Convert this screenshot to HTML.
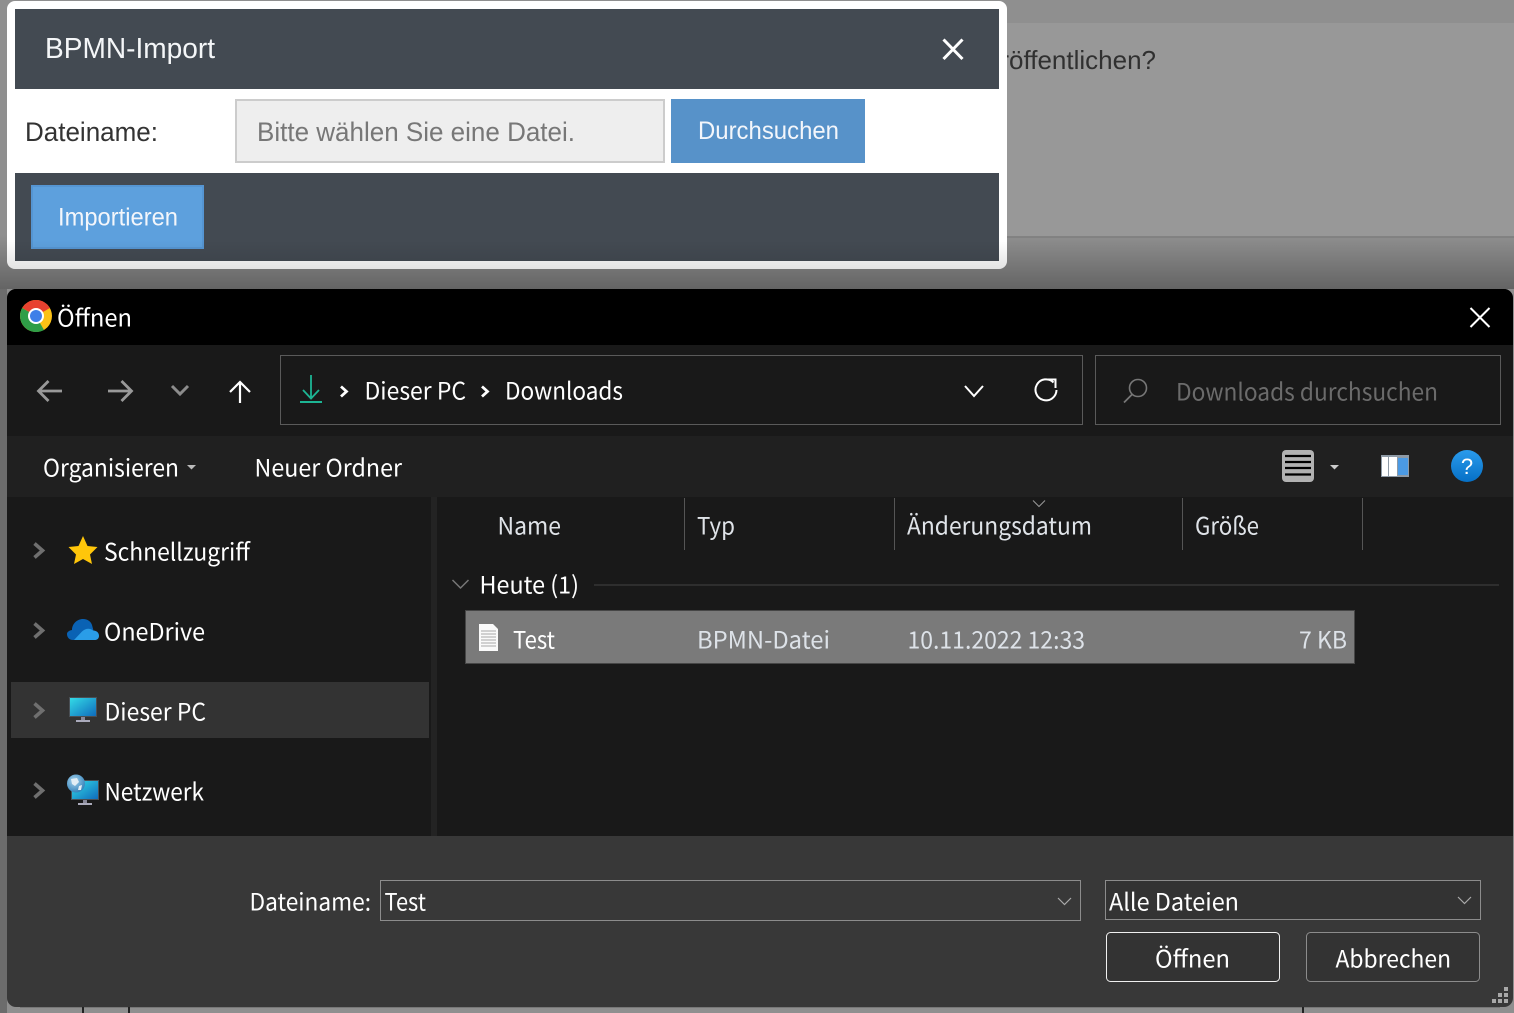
<!DOCTYPE html>
<html lang="de"><head><meta charset="utf-8"><title>Öffnen</title>
<style>
html,body{margin:0;padding:0;background:#6a6a6a;width:1514px;height:1013px;overflow:hidden}
svg{display:block}
.a{font-family:"Liberation Sans",Arial,sans-serif}
.s{font-family:"Noto Sans CJK JP","Liberation Sans",sans-serif;font-size:24px;fill:#fff}
.h{fill:#dfe3e8}
.r{fill:#dde2e8}
</style></head><body>
<svg width="1514" height="1013" viewBox="0 0 1514 1013" xmlns="http://www.w3.org/2000/svg">
<defs>
<linearGradient id="sh" x1="0" y1="0" x2="0" y2="1"><stop offset="0" stop-color="#000" stop-opacity="0"/><stop offset="1" stop-color="#000" stop-opacity=".3"/></linearGradient>
<linearGradient id="sh2" x1="0" y1="0" x2="0" y2="1"><stop offset="0" stop-color="#000" stop-opacity="0"/><stop offset="1" stop-color="#000" stop-opacity=".11"/></linearGradient>
<linearGradient id="scr" x1="0" y1="0" x2="1" y2="1"><stop offset="0" stop-color="#33dbe6"/><stop offset="1" stop-color="#0f6cbd"/></linearGradient>
<linearGradient id="hlp" x1="0" y1="0" x2="0" y2="1"><stop offset="0" stop-color="#2a9bec"/><stop offset="1" stop-color="#0670c6"/></linearGradient>
<radialGradient id="glb" cx=".4" cy=".35" r=".7"><stop offset="0" stop-color="#a8d4ee"/><stop offset="1" stop-color="#2f7fb8"/></radialGradient>
</defs>

<!-- backdrop -->
<rect width="1514" height="1013" fill="#8f8f8f"/>
<rect x="1000" y="23" width="514" height="213" fill="#989898"/>
<rect x="1000" y="236" width="514" height="2" fill="#838383"/>
<text class="a" x="1156" y="69" text-anchor="end" font-size="26" fill="#303030">veröffentlichen?</text>
<rect x="0" y="235" width="1514" height="54" fill="url(#sh)"/>

<!-- modal -->
<rect x="7" y="1" width="1000" height="268" rx="8" fill="#fff"/>
<rect x="15" y="9" width="984" height="80" fill="#434a52"/>
<rect x="15" y="173" width="984" height="88" fill="#434a52"/>
<text class="a" x="45" y="58" font-size="29" fill="#f4f6f8" textLength="170" lengthAdjust="spacingAndGlyphs">BPMN-Import</text>
<path d="M943.500 39.500L962.500 59M962.500 39.500L943.500 59" stroke="#fff" stroke-width="3" fill="none"/>
<text class="a" x="25" y="141" font-size="27" fill="#333" textLength="133" lengthAdjust="spacingAndGlyphs">Dateiname:</text>
<rect x="236" y="100" width="428" height="62" fill="#eee" stroke="#ccc" stroke-width="2"/>
<text class="a" x="257" y="141" font-size="27" fill="#777" textLength="318" lengthAdjust="spacingAndGlyphs">Bitte wählen Sie eine Datei.</text>
<rect x="671" y="99" width="194" height="64" fill="#5792c9"/>
<text class="a" x="698" y="139" font-size="25" fill="#f3f6fb" textLength="141" lengthAdjust="spacingAndGlyphs">Durchsuchen</text>
<rect x="32" y="186" width="171" height="62" fill="#5da0dd" stroke="#5595d2" stroke-width="2"/>
<text class="a" x="58" y="225.500" font-size="25" fill="#f3f6fb" textLength="120" lengthAdjust="spacingAndGlyphs">Importieren</text>
<path d="M7 240H1007V261a8 8 0 0 1-8 8H15a8 8 0 0 1-8-8Z" fill="url(#sh2)"/>

<rect x="0" y="289" width="7" height="724" fill="#6c6c6c"/>

<!-- file dialog -->
<rect x="7" y="289" width="1506" height="718" rx="9" fill="#383838"/>
<path d="M7 345V298a9 9 0 0 1 9-9H1504a9 9 0 0 1 9 9V345Z" fill="#000"/>
<rect x="7" y="345" width="1506" height="91" fill="#191919"/>
<rect x="7" y="436" width="1506" height="61" fill="#202020"/>
<rect x="7" y="497" width="1506" height="339" fill="#191919"/>
<rect x="431" y="497" width="6" height="339" fill="#232323"/>

<!-- chrome icon -->
<circle cx="36" cy="316" r="16" fill="#fbc116"/>
<path d="M36 316L22.200 308A16 16 0 0 1 49.900 308Z" fill="#e8412f"/>
<path d="M36 316L22.200 308A16 16 0 0 0 36 332Z" fill="#2f9e47"/>
<path d="M36 316L36 332A16 16 0 0 0 44 330Z" fill="#2f9e47"/>
<circle cx="36" cy="316" r="8" fill="#fff"/><circle cx="36" cy="316" r="6" fill="#3f7fe8"/>
<text class="s" x="57" y="326.500" textLength="75" lengthAdjust="spacingAndGlyphs">Öffnen</text>
<path d="M1470.500 308L1489.500 327M1489.500 308L1470.500 327" stroke="#fff" stroke-width="2" fill="none"/>

<!-- nav -->
<path d="M62 391H39M48.500 381L38.500 391L48.500 401" stroke="#999" stroke-width="2.800" fill="none"/>
<path d="M108 391H131M121.500 381L131.500 391L121.500 401" stroke="#999" stroke-width="2.800" fill="none"/>
<path d="M172 386L180 394L188 386" stroke="#8c8c8c" stroke-width="3" fill="none"/>
<path d="M240 403V382M230 392L240 382L250 392" stroke="#fff" stroke-width="2.200" fill="none"/>
<rect x="280.500" y="355.500" width="802" height="69" fill="none" stroke="#5a5a5a"/>
<rect x="1095.500" y="355.500" width="405" height="69" fill="none" stroke="#5a5a5a"/>
<path d="M311 375V399M303 390L311 398.500L319 390" stroke="#1db594" stroke-width="1.800" fill="none"/>
<path d="M300 402H322" stroke="#1db594" stroke-width="2" fill="none"/>
<path d="M341 386.500L346.500 391.500L341 396.500" stroke="#fff" stroke-width="2.800" fill="none"/>
<text class="s" x="364.500" y="399.500" textLength="101.500" lengthAdjust="spacingAndGlyphs">Dieser PC</text>
<path d="M482 386.500L487.500 391.500L482 396.500" stroke="#fff" stroke-width="2.800" fill="none"/>
<text class="s" x="505" y="399.500" textLength="118" lengthAdjust="spacingAndGlyphs">Downloads</text>
<path d="M965 386L974 396L983 386" stroke="#fff" stroke-width="2" fill="none"/>
<path d="M1053.500 382.500A10.500 10.500 0 1 0 1056.500 390" stroke="#fff" stroke-width="2" fill="none"/>
<path d="M1047 379.500H1055.500V388" stroke="#fff" stroke-width="2" fill="none"/>
<circle cx="1138" cy="388" r="8.500" stroke="#777" stroke-width="1.600" fill="none"/>
<path d="M1132 394.500L1124 402.500" stroke="#777" stroke-width="1.800" fill="none"/>
<text class="s" x="1176" y="400.500" textLength="262" lengthAdjust="spacingAndGlyphs" style="fill:#6b6b6b">Downloads durchsuchen</text>

<!-- toolbar -->
<text class="s" x="43" y="476.500" textLength="136" lengthAdjust="spacingAndGlyphs">Organisieren</text>
<path d="M187 465H196L191.500 469.500Z" fill="#bbb"/>
<text class="s" x="254.500" y="476.500" textLength="147.500" lengthAdjust="spacingAndGlyphs">Neuer Ordner</text>
<rect x="1282" y="450" width="32" height="32" rx="4" fill="#b2b2b2"/>
<path d="M1285 456H1311M1285 462H1311M1285 468H1311M1285 474.500H1311" stroke="#000" stroke-width="2.200"/>
<path d="M1330 465H1339L1334.500 469.500Z" fill="#ccc"/>
<rect x="1381" y="455" width="28" height="22" fill="#8e9aa6"/>
<rect x="1382" y="457" width="6" height="19" fill="#fff"/>
<rect x="1389" y="457" width="8" height="19" fill="#fff"/>
<rect x="1398" y="458" width="10" height="17" fill="#4b9ae4"/>
<circle cx="1467" cy="466" r="16" fill="url(#hlp)"/>
<text class="a" x="1467" y="474" text-anchor="middle" font-size="22" fill="#fff">?</text>

<!-- column headers -->
<path d="M684.500 498V550M894.500 498V550M1182.500 498V550M1362.500 498V550" stroke="#555"/>
<path d="M1033 500.500L1039 506.500L1045 500.500" stroke="#999" fill="none"/>
<text class="s h" x="497.500" y="534.500" textLength="63.500" lengthAdjust="spacingAndGlyphs">Name</text>
<text class="s h" x="697" y="534.500" textLength="38" lengthAdjust="spacingAndGlyphs">Typ</text>
<text class="s h" x="907" y="534.500" textLength="185" lengthAdjust="spacingAndGlyphs">Änderungsdatum</text>
<text class="s h" x="1195" y="534.500" textLength="64" lengthAdjust="spacingAndGlyphs">Größe</text>

<!-- group -->
<path d="M452.500 580L460.500 588L468.500 580" stroke="#777" stroke-width="1.500" fill="none"/>
<text class="s" x="479.500" y="593.500" textLength="99.500" lengthAdjust="spacingAndGlyphs">Heute (1)</text>
<rect x="594" y="584" width="905" height="2" fill="#2e2e2e"/>

<!-- selected row -->
<rect x="465.500" y="610.500" width="889" height="53" fill="#7a7a7a" stroke="#464646"/>
<path d="M479 624H493L498 629V651H479Z" fill="#fafafa"/>
<path d="M481 631H496M481 634H496M481 637H496M481 640H496M481 643H496M481 646H496" stroke="#a8a8a8"/>
<text class="s" x="513" y="648.500" textLength="42" lengthAdjust="spacingAndGlyphs">Test</text>
<text class="s r" x="697" y="648.500" textLength="133" lengthAdjust="spacingAndGlyphs">BPMN-Datei</text>
<text class="s r" x="907.500" y="648.500" textLength="177.500" lengthAdjust="spacingAndGlyphs">10.11.2022 12:33</text>
<text class="s r" x="1299" y="648.500" textLength="48" lengthAdjust="spacingAndGlyphs">7 KB</text>

<!-- sidebar -->
<rect x="11" y="682" width="418" height="56" fill="#333"/>
<g stroke="#6f6f6f" stroke-width="3.600" fill="none">
<path d="M34.500 543.500L42.500 550.500L34.500 557.500"/>
<path d="M34.500 623.500L42.500 630.500L34.500 637.500"/>
<path d="M34.500 703.500L42.500 710.500L34.500 717.500"/>
<path d="M34.500 783.500L42.500 790.500L34.500 797.500"/>
</g>
<path d="M83 536L87.500 546L97.500 547L90 554.500L92 564L83 559L74 564L76 554.500L68.500 547L78.500 546Z" fill="#ffc60a"/>
<text class="s" x="104" y="560.500" textLength="146" lengthAdjust="spacingAndGlyphs">Schnellzugriff</text>

<path d="M72 630C72 624 77 619 83 619C88 619 91 622 92 625L96 640H73C69 640 67 637 67 634C67 632 69 630.500 72 630Z" fill="#0a62b4"/>
<path d="M74 640L82 631.500C86 628 90 628 93 630.500C97 630.500 99 633 99 636C99 638.500 97 640 95 640Z" fill="#2a9de8"/>
<text class="s" x="104" y="640.500" textLength="101" lengthAdjust="spacingAndGlyphs">OneDrive</text>

<rect x="69" y="697" width="28" height="20" fill="#4a4f55"/>
<rect x="70" y="698" width="26" height="18" fill="url(#scr)"/>
<rect x="81" y="717" width="4" height="3" fill="#889"/>
<rect x="76" y="720" width="14" height="2" fill="#aab"/>
<text class="s" x="104.500" y="720.500" textLength="101.500" lengthAdjust="spacingAndGlyphs">Dieser PC</text>

<rect x="71" y="780" width="28" height="20" fill="#4a4f55"/>
<rect x="72" y="781" width="26" height="18" fill="url(#scr)"/>
<rect x="83" y="800" width="4" height="3" fill="#889"/>
<rect x="78" y="803" width="14" height="2" fill="#aab"/>
<circle cx="76" cy="783.500" r="9" fill="url(#glb)"/>
<path d="M71 779L77 778L79 782L75 786L72 784ZM79 786L82 785L81 790L78 790Z" fill="#e2eef5"/>
<text class="s" x="104.500" y="800.500" textLength="99.500" lengthAdjust="spacingAndGlyphs">Netzwerk</text>

<!-- bottom -->
<text class="s" x="249.500" y="910.500" textLength="121.500" lengthAdjust="spacingAndGlyphs">Dateiname:</text>
<rect x="380.500" y="880.500" width="700" height="40" fill="#383838" stroke="#8c8c8c"/>
<text class="s" x="384.500" y="910.500" textLength="41.500" lengthAdjust="spacingAndGlyphs">Test</text>
<path d="M1058 898L1064.500 904.500L1071 898" stroke="#aaa" stroke-width="1.200" fill="none"/>
<rect x="1105.500" y="880.500" width="375" height="39" fill="#333" stroke="#8c8c8c"/>
<text class="s" x="1109" y="910.500" textLength="130" lengthAdjust="spacingAndGlyphs">Alle Dateien</text>
<path d="M1458 897L1464.500 903.500L1471 897" stroke="#aaa" stroke-width="1.200" fill="none"/>
<rect x="1106.500" y="932.500" width="173" height="49" rx="4" fill="#333" stroke="#f0f0f0"/>
<text class="s" x="1155" y="967.500" textLength="75" lengthAdjust="spacingAndGlyphs">Öffnen</text>
<rect x="1306.500" y="932.500" width="173" height="49" rx="4" fill="#333" stroke="#8c8c8c"/>
<text class="s" x="1335.500" y="967.500" textLength="115.500" lengthAdjust="spacingAndGlyphs">Abbrechen</text>
<g fill="#a8a8a8">
<rect x="1504" y="987" width="4" height="4"/>
<rect x="1498" y="993" width="4" height="4"/><rect x="1504" y="993" width="4" height="4"/>
<rect x="1492" y="999" width="4" height="4"/><rect x="1498" y="999" width="4" height="4"/><rect x="1504" y="999" width="4" height="4"/>
</g>

<!-- strip below -->
<rect x="20" y="1007" width="1480" height="1" fill="#777"/>
<rect x="82" y="1007" width="2" height="6" fill="#222"/>
<rect x="128" y="1007" width="2" height="6" fill="#222"/>
<rect x="1302" y="1007" width="2" height="6" fill="#222"/>
</svg>
</body></html>
